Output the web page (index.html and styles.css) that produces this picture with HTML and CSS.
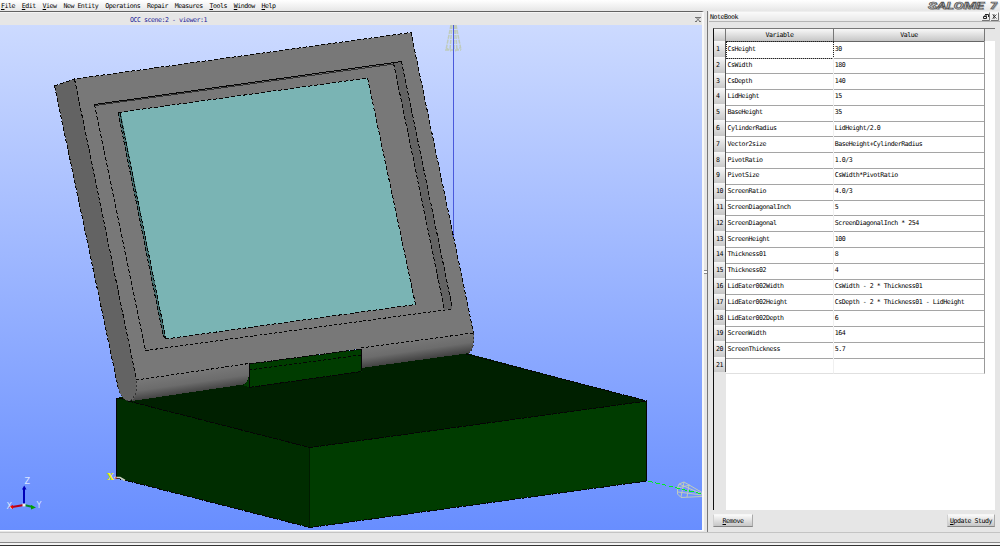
FILE: index.html
```
<!DOCTYPE html>
<html lang="en">
<head>
<meta charset="utf-8">
<title>SALOME 7</title>
<link rel="stylesheet" href="styles.css">
</head>
<body>
<div class="app">
  <header class="menubar">
    <nav class="menus">
      <span class="menu"><span class="t"><u>F</u>ile</span></span><span class="menu"><span class="t"><u>E</u>dit</span></span><span class="menu"><span class="t"><u>V</u>iew</span></span><span class="menu"><span class="t">New Entity</span></span><span class="menu"><span class="t">Operations</span></span><span class="menu"><span class="t">Repair</span></span><span class="menu"><span class="t">Measures</span></span><span class="menu"><span class="t"><u>T</u>ools</span></span><span class="menu"><span class="t"><u>W</u>indow</span></span><span class="menu"><span class="t"><u>H</u>elp</span></span>
    </nav>
    <svg class="logo" width="74" height="11" viewBox="0 0 74 11">
      <text class="logo-shadow" x="3" y="9.6" textLength="56" lengthAdjust="spacingAndGlyphs">SALOME</text>
      <text class="logo-text" x="2" y="8.8" textLength="56" lengthAdjust="spacingAndGlyphs">SALOME</text>
      <text class="logo-shadow" x="65" y="9.6" textLength="7" lengthAdjust="spacingAndGlyphs">7</text>
      <text class="logo-text" x="64" y="8.8" textLength="7" lengthAdjust="spacingAndGlyphs">7</text>
    </svg>
  </header>
  <main class="work">
    <section class="viewer">
      <div class="viewer-title"><span class="t">OCC scene:2 - viewer:1</span>
        <svg class="corner" width="6" height="5" viewBox="0 0 6 5"><path d="M0 .5H6M0 4.5H2M4 4.5H6M1.500 1L4.500 4M4.500 1L1.500 4" /></svg>
      </div>
      <svg class="scene" width="702" height="505" viewBox="0 25 702 505">
        <defs>
          <linearGradient id="sky" x1="0" y1="0" x2="0" y2="1"><stop offset="0" stop-color="#ccdaff"/><stop offset="1" stop-color="#688eff"/></linearGradient>
          <linearGradient id="roll" gradientUnits="userSpaceOnUse" x1="190" y1="372" x2="193.200" y2="394"><stop offset="0" stop-color="#787878"/><stop offset=".5" stop-color="#6c6c6c"/><stop offset="1" stop-color="#3c3c3c"/></linearGradient>
        </defs>
        <rect y="25" width="702" height="505" fill="url(#sky)"/>
        <g class="cone">
          <path d="M451 25L446 50M456 25L461 50M452 25L450 50M455 25L457 50M454 25V50M445 50H461M446 48L451 51M455 51L460 48" stroke-width="1.500" stroke-dasharray="4 1"/>
        </g>
        <path d="M453.500 25V238" stroke="#4a59dc"/>
        <g class="edges">
          <path fill="#002d00" stroke="none" d="M116.500 398L310 447.500V527.500L116.500 478Z"/>
          <path fill="#003c00" stroke="none" d="M310 447.500L647 401V481L310 527.500Z"/>
          <path fill="#002000" stroke="none" d="M116.500 398L240 375L466 353L647 401L310 447.500Z"/>
          <path d="M128 401L310 447.500L647 401M116.500 478L310 527.500L647 481M466 354L647 401" stroke-dasharray="5 1"/>
          <path d="M116.500 398V478M646.500 401V481M116.500 398H123"/>
          <path d="M309.500 448V527" stroke="#001c00"/>
          <path fill="#636363" stroke="none" d="M54.500 86L74.500 79L136.500 380Q138 400 129 401Q121 400 118 387Z"/>
          <path fill="#787878" stroke="none" d="M74.500 79L411 32.500L473.500 333L136.500 380Z"/>
          <path fill="url(#roll)" stroke="none" d="M136.500 379.500L249 363.500V374Q248 383 243 384.500L132 401Q137 396 136.500 380Z"/>
          <path fill="url(#roll)" stroke="none" d="M361 348L473.500 332.500V343Q473 352 466 353.500L361 368Z"/>
          <path fill="#003c00" stroke="none" d="M249 364L361.500 349V371.500L249 387.500L243 385Q249 383 249 374Z"/>
          <path d="M249.500 364V387M361.500 349V371"/>
          <path d="M249 364L361.500 349M249 387.500L361.500 371.500" stroke-dasharray="5 1"/>
          <path d="M249 370L361 355M136.500 380L249 363.500M361 348L473 333M145.500 350.500L452 309" stroke-dasharray="3 2"/>
          <path d="M54.500 86L74.500 79L411 32.500L473.500 333M74.500 79L136.500 380M54.500 86L118 387" stroke-dasharray="4 2"/>
          <path d="M118 387Q121 400 129 401Q138 397 136.500 380M473.500 333V344Q472 353 466 354" stroke="#333" stroke-dasharray="2 2"/>
          <path fill="#636363" stroke="none" d="M393.500 63L401.500 61.500L452.500 308.500L444.500 310Z"/>
          <path d="M393.500 63L444.500 310M401.500 61.500L452.500 308.500M94.500 104.500L145.500 350.500" stroke-dasharray="4 2"/>
          <path d="M94.500 104.500L401.500 61.500"/>
          <path d="M95 105.500L394 64" stroke="#333"/>
          <path fill="#7ab4b4" stroke="none" d="M118 112.500L367.500 78L415.500 304.500L166 339Z"/>
          <path fill="#456d6d" stroke="none" d="M118 112L121 113L166 339L163 335Z"/>
          <path d="M118 112.500L367.500 78L415.500 304.500L166 339" stroke-dasharray="4 2"/>
          <path d="M118 112L163 335L166 339M120 113L166 339" stroke-dasharray="4 2"/>
        </g>
        <g class="cone"><path d="M677.500 488L679 484L684 482L702 492.500M677.500 488V494L681 497.500L702 496.500M679 484L702 494M678 492L702 495M684 482L681 497M689 485L687 497M678 488L690 485"/></g>
        <path d="M648 481L702 494" stroke="#00ec24" stroke-dasharray="5 2" shape-rendering="crispEdges"/>
        <path d="M114 477.500H120L125 480.500" stroke="#ccd2c0" stroke-width="1.500" fill="none"/><path d="M115 478H117" stroke="#d22"/>
        <text class="origin" x="107" y="480" textLength="7" lengthAdjust="spacingAndGlyphs">X</text>
        <g class="triad">
          <path d="M24 504V488" stroke="#0000b8" stroke-width="2"/><path d="M22 489.500L24.200 485.500L26.500 489.500Z" fill="#0000b8"/>
          <path d="M24 505L12 507" stroke="#b80016" stroke-width="2"/><path d="M8.500 507L13 505V509Z" fill="#f00000"/>
          <path d="M24 505L33 507" stroke="#008b28" stroke-width="2"/><path d="M36 507.500L31 505V509.500Z" fill="#00a000"/>
          <rect x="22.500" y="503.500" width="3" height="3" fill="#eee"/>
          <text x="24.500" y="483.500">Z</text><text x="6.500" y="508.500">X</text><text x="36.500" y="508">Y</text>
        </g>
      </svg>
    </section>
    <div class="splitter"><i></i></div>
    <aside class="dock">
      <div class="dock-title"><span class="t">NoteBook</span>
        <svg width="17" height="9" viewBox="0 0 17 9"><path class="btn" d="M7.500 .5V8.500H0M16.500 .5V8.500H9"/><path d="M3 2.500H6.500V5M1.500 4.500H4.500V6.500H1.500ZM2 4H5"/><path d="M10.500 2.500L14.500 6.500M14.500 2.500L10.500 6.500M12 2V7" opacity=".75"/></svg>
      </div>
      <div class="table">
        <div class="row head"><b></b><b><span class="t">Variable</span></b><b><span class="t">Value</span></b></div>
        <div class="row current"><b><span class="t">1</span></b><span><span class="t">CsHeight</span></span><span><span class="t">30</span></span></div>
        <div class="row"><b><span class="t">2</span></b><span><span class="t">CsWidth</span></span><span><span class="t">180</span></span></div>
        <div class="row"><b><span class="t">3</span></b><span><span class="t">CsDepth</span></span><span><span class="t">140</span></span></div>
        <div class="row"><b><span class="t">4</span></b><span><span class="t">LidHeight</span></span><span><span class="t">15</span></span></div>
        <div class="row"><b><span class="t">5</span></b><span><span class="t">BaseHeight</span></span><span><span class="t">35</span></span></div>
        <div class="row"><b><span class="t">6</span></b><span><span class="t">CylinderRadius</span></span><span><span class="t">LidHeight/2.0</span></span></div>
        <div class="row"><b><span class="t">7</span></b><span><span class="t">Vector2size</span></span><span><span class="t">BaseHeight+CylinderRadius</span></span></div>
        <div class="row"><b><span class="t">8</span></b><span><span class="t">PivotRatio</span></span><span><span class="t">1.0/3</span></span></div>
        <div class="row"><b><span class="t">9</span></b><span><span class="t">PivotSize</span></span><span><span class="t">CsWidth*PivotRatio</span></span></div>
        <div class="row"><b><span class="t">10</span></b><span><span class="t">ScreenRatio</span></span><span><span class="t">4.0/3</span></span></div>
        <div class="row"><b><span class="t">11</span></b><span><span class="t">ScreenDiagonalInch</span></span><span><span class="t">5</span></span></div>
        <div class="row"><b><span class="t">12</span></b><span><span class="t">ScreenDiagonal</span></span><span><span class="t">ScreenDiagonalInch * 254</span></span></div>
        <div class="row"><b><span class="t">13</span></b><span><span class="t">ScreenHeight</span></span><span><span class="t">100</span></span></div>
        <div class="row"><b><span class="t">14</span></b><span><span class="t">Thickness01</span></span><span><span class="t">8</span></span></div>
        <div class="row"><b><span class="t">15</span></b><span><span class="t">Thickness02</span></span><span><span class="t">4</span></span></div>
        <div class="row"><b><span class="t">16</span></b><span><span class="t">LidEater002Width</span></span><span><span class="t">CsWidth - 2 * Thickness01</span></span></div>
        <div class="row"><b><span class="t">17</span></b><span><span class="t">LidEater002Height</span></span><span><span class="t">CsDepth - 2 * Thickness01 - LidHeight</span></span></div>
        <div class="row"><b><span class="t">18</span></b><span><span class="t">LidEater002Depth</span></span><span><span class="t">6</span></span></div>
        <div class="row"><b><span class="t">19</span></b><span><span class="t">ScreenWidth</span></span><span><span class="t">164</span></span></div>
        <div class="row"><b><span class="t">20</span></b><span><span class="t">ScreenThickness</span></span><span><span class="t">5.7</span></span></div>
        <div class="row last"><b><span class="t">21</span></b><span></span><span></span></div>
        <div class="rest"></div>
      </div>
      <div class="buttons"><button class="remove"><span class="t"><u>R</u>emove</span></button><button class="update"><span class="t"><u>U</u>pdate Study</span></button></div>
    </aside>
  </main>
  <footer class="status"></footer>
</div>
</body>
</html>
```
FILE: styles.css
```
* { box-sizing: border-box; }
body {
  margin: 0;
  background: #e6e6e6;
  color: #000;
  font: 6.6px/10px "DejaVu Sans Mono", "Liberation Mono", monospace;
}
.app { display: flex; flex-direction: column; width: 1000px; height: 546px; overflow: hidden; }
/* condensed monospace: 3.5px advance per character */
.t { display: inline-block; white-space: pre; letter-spacing: -0.473px; }
u { text-decoration: underline; text-decoration-thickness: 1px; text-underline-offset: 1px; }

.menubar { display: flex; justify-content: space-between; height: 11px; background: linear-gradient(#fff, #e6e6e6); }
.menus { display: flex; gap: 6.8px; padding-left: 1px; }
.menu { line-height: 12px; }
.logo { display: block; }
.logo text { font: italic 700 9px Roboto, sans-serif; }
.logo-shadow { fill: #b4b4b4; }
.logo-text { fill: #d8d8d8; stroke: #505050; stroke-width: .6px; }

.work { display: flex; height: 521px; }
.viewer { width: 704px; height: 520px; border-top: 1px solid #626262; border-right: 2px solid #f8f8f8; border-bottom: 1px solid #fff; }
.viewer-title { display: flex; align-items: center; height: 13px; padding: 1px 0 0 130px; border-top: 1px solid #f4f4f4; color: #1c1c96; }
.corner { margin: 0 1px 0 auto; fill: none; stroke: #555; stroke-width: .8px; }
.scene { display: block; }
.edges { fill: none; stroke: #050505; shape-rendering: crispEdges; }
.cone { fill: none; stroke: #bfcbbc; stroke-width: 1px; }
.origin { fill: #f5f500; font: bold 9px "DejaVu Serif", serif; }
.triad text { fill: #dce5ff; font: 8px "DejaVu Sans", sans-serif; }

.splitter { display: flex; align-items: center; width: 4px; border-right: 1px solid #777; }
.splitter i { width: 3px; height: 4px; border: solid #888; border-width: 1px 0; background: #fff; }

.dock { display: flex; flex-direction: column; width: 292px; padding-left: 1px; border-top: 1px solid #eee; }
.dock-title { display: flex; justify-content: space-between; align-items: center; height: 10px; padding-left: 1px; border-bottom: 1px solid #b5b5b5; background: linear-gradient(#fafafa, #e8e8e8); }
.dock-title svg { margin-right: 1px; fill: none; stroke: #222; }
.dock-title .btn { stroke: #777; }
.table { display: flex; flex-direction: column; width: 282px; height: 482px; margin: 6px 0 0 4px; border-top: 1px solid #777; border-left: 1px solid #111; background: #fff; }
.row { display: grid; grid-template-columns: 12px 108px 151px; flex: none; height: 15.8px; line-height: 16.4px; }
.row > b { padding-left: 2px; border-right: 1px solid #555; border-bottom: 1px solid #666; background: linear-gradient(#f8f8f8, #c6c6c6); font-weight: normal; }
.row > span { padding-left: 1.5px; border-right: 1px solid #f0f0f0; border-bottom: 1px solid #a5a5a5; }
.row > span:last-child { padding-left: .8px; border-right-color: #999; }
.row .t { line-height: 10px; }
.head { height: 12.1px; line-height: 12px; background: #e6e6e6; }
.head > b { padding: 0; border-right-color: #777; text-align: center; }
.current > span:nth-child(2) { outline: 1px dotted #222; outline-offset: -1px; }
.last { height: 15px; }
.last > b, .last > span { border-bottom-color: #e0e0e0; }
.rest { flex: 1; width: 12px; background: #e6e6e6; }
.buttons { display: flex; justify-content: space-between; padding: 4px 5px 0 4px; }
button { height: 13px; padding: 0; border: 1px solid #aaa; border-color: #f6f6f6 #aaa #858585 #d0d0d0; background: linear-gradient(#fafafa, #c6c6c6); color: #000; font: inherit; line-height: 10px; }
.remove { width: 40px; }
.update { width: 48px; }

.status { height: 14px; margin-top: auto; border-top: 1px solid #c4c4c4; border-bottom: 1px solid #333; background: linear-gradient(#e6e6e6 9px, #888 9px, #888 10px, #f4f4f4 10px); }
```
